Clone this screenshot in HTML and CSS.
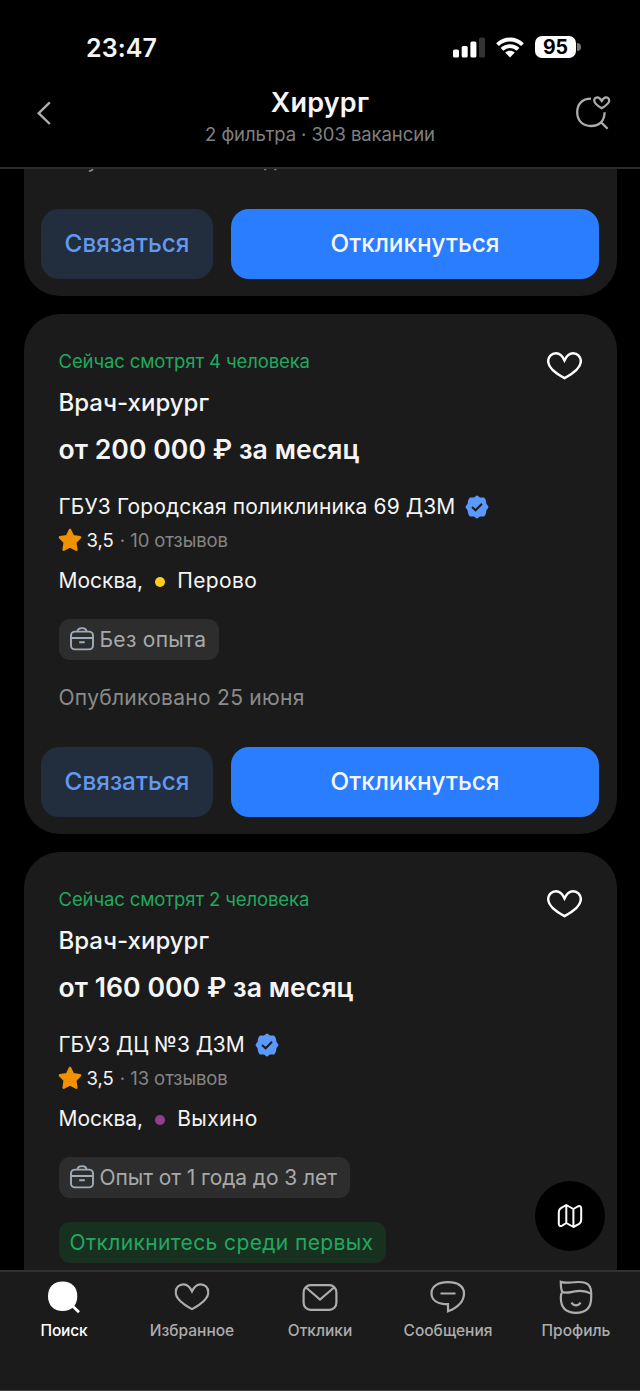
FILE: index.html
```html
<!DOCTYPE html>
<html lang="ru">
<head>
<meta charset="utf-8">
<title>Хирург</title>
<link rel="stylesheet" href="styles.css">
</head>
<body>
<svg class="defs" width="0" height="0">
  <symbol id="heart" viewBox="0 0 35 28"><path d="M17.5 8.4C15.2 3.5 12.2 1.3 9 1.3C4.4 1.3 1.2 4.6 1.2 9.2C1.2 15.8 8.6 21.3 17.5 26.1C26.4 21.3 33.8 15.8 33.8 9.2C33.8 4.6 30.6 1.3 26 1.3C22.8 1.3 19.8 3.5 17.5 8.4Z"/></symbol>
  <symbol id="star" viewBox="0 0 24 24"><path d="M12 2L15 8.2L22 9.3L17.2 14.4L18.3 21.6L12 18.4L5.7 21.6L6.8 14.4L2 9.3L9 8.2Z" fill="#f29100" stroke="#f29100" stroke-width="2.6" stroke-linejoin="round"/></symbol>
  <symbol id="verified" viewBox="0 0 24 24"><path d="M12 1.6L14.6 3.6L18.6 3.6L19.8 5.6L20.4 9L22.4 12L20.4 15L19.8 18.4L18.6 20.4L14.6 20.4L12 22.4L9.4 20.4L5.4 20.4L4.2 18.4L3.6 15L1.6 12L3.6 9L4.2 5.6L5.4 3.6L9.4 3.6Z" fill="#5a9aff" stroke="#5a9aff" stroke-width="2.2" stroke-linejoin="round"/><path d="M7 12L10.6 15.3L17 8.7" fill="none" stroke="#1b1b1b" stroke-width="2"/></symbol>
  <symbol id="bag" viewBox="0 0 24 24"><rect x="1" y="4.6" width="22" height="17.8" rx="4"/><path d="M1.2 11H22.8M9.2 15.2H14.8M7.4 4.6C7.6 2.4 9.3 1.1 12 1.1S16.4 2.4 16.6 4.6"/></symbol>
</svg>
<div class="screen">
  <header class="header">
    <div class="status">
      <span class="clock">23:47</span>
      <div class="status-icons">
        <svg width="32" height="21" viewBox="0 0 32 21" fill="#fff"><rect x="0" y="12.5" width="6" height="8" rx="1.6"/><rect x="8.7" y="9" width="6" height="11.5" rx="1.6"/><rect x="17.4" y="4.5" width="6" height="16" rx="1.6"/><rect x="26" y="0.5" width="6" height="20" rx="1.6" fill="#333"/></svg>
        <svg width="28" height="21" viewBox="0 0 28 21" fill="none" stroke="#fff" stroke-width="3.9"><path d="M1.5 7.7C8.5 .8 19.5 .8 26.5 7.7"/><path d="M6 12.3C10.4 8 17.6 8 22 12.3"/><path d="M9.2 15.5C12 13 16 13 18.8 15.5L14 20.4Z" fill="#fff" stroke="none"/></svg>
        <div class="battery"><span class="level">95</span><span class="cap"></span></div>
      </div>
    </div>
    <div class="nav">
      <svg class="back" width="16" height="26" viewBox="0 0 16 26" fill="none" stroke="#adadad" stroke-width="2.4"><path d="M13.8 2.4L2.7 13.2L13.8 24"/></svg>
      <div class="heading"><h1>Хирург</h1><p>2 фильтра · 303 вакансии</p></div>
      <svg class="saved" width="36" height="36" viewBox="0 0 36 36" fill="none" stroke="#adadad" stroke-width="2.3"><path d="M16 3.6C7.3 3.6 2.2 9 2.2 17.3S7.6 31 16 31S29.6 25.8 29.6 17.3M25.4 26.6L32.6 33.8"/><path d="M26.7 5.8C25.2 3.4 24 2.2 22.2 2.3C20.2 2.4 19.1 3.9 19.3 6C19.6 9 22.9 11 26.7 13.2C30.5 11 33.8 9 34.1 6C34.3 3.9 33.2 2.4 31.2 2.3C29.4 2.2 28.2 3.4 26.7 5.8Z"/></svg>
    </div>
  </header>

  <main class="list">
    <article class="card partial">
      <p class="published">Опубликовано сегодня</p>
      <div class="actions"><button class="btn contact">Связаться</button><button class="btn apply">Откликнуться</button></div>
    </article>

    <article class="card">
      <div class="card-top"><p class="watching">Сейчас смотрят 4 человека</p><svg class="like" width="35" height="28"><use href="#heart"/></svg></div>
      <h2 class="job">Врач-хирург</h2>
      <p class="salary">от 200 000 ₽ за месяц</p>
      <p class="company clinic"><span>ГБУЗ Городская поликлиника 69 ДЗМ</span><svg width="24" height="24"><use href="#verified"/></svg></p>
      <p class="rating"><svg width="24" height="24"><use href="#star"/></svg><b>3,5</b><span>· 10 отзывов</span></p>
      <p class="city"><span>Москва,</span><i class="dot yellow"></i><span class="metro">Перово</span></p>
      <p class="tag"><svg width="24" height="24"><use href="#bag"/></svg><span>Без опыта</span></p>
      <p class="published">Опубликовано 25 июня</p>
      <div class="actions"><button class="btn contact">Связаться</button><button class="btn apply">Откликнуться</button></div>
    </article>

    <article class="card last">
      <div class="card-top"><p class="watching">Сейчас смотрят 2 человека</p><svg class="like" width="35" height="28"><use href="#heart"/></svg></div>
      <h2 class="job">Врач-хирург</h2>
      <p class="salary">от 160 000 ₽ за месяц</p>
      <p class="company"><span>ГБУЗ ДЦ №3 ДЗМ</span><svg width="24" height="24"><use href="#verified"/></svg></p>
      <p class="rating"><svg width="24" height="24"><use href="#star"/></svg><b>3,5</b><span>· 13 отзывов</span></p>
      <p class="city"><span>Москва,</span><i class="dot purple"></i><span class="metro">Выхино</span></p>
      <p class="tag long"><svg width="24" height="24"><use href="#bag"/></svg><span>Опыт от 1 года до 3 лет</span></p>
      <p class="tag first">Откликнитесь среди первых</p>
    </article>
  </main>

  <button class="map" aria-label="Карта"><svg width="26" height="26" viewBox="0 0 26 26" fill="none" stroke="#fff" stroke-width="2" stroke-linejoin="round"><path d="M9.3 2L16.4 6L20.7 3.5C22.9 2.4 24.2 3.2 24.2 5.7V16.5C24.2 19 23.6 20 21.7 21.2L16.4 24L9.3 20L5.2 22.6C3 23.7 1.8 22.8 1.8 20.4V9.5C1.8 7.2 2.4 6 4.3 4.9ZM9.3 2V20M16.4 6V24"/></svg></button>

  <nav class="tabs">
    <a class="tab active"><svg width="36" height="36" viewBox="0 0 36 36"><path d="M16.6 2.6C25.6 2.6 31.3 8.2 31.3 17.2S25.6 32 16.6 32S2 26.2 2 17.2S7.6 2.6 16.6 2.6Z" fill="#fff" stroke="none"/><path d="M26 26.5L33 33.2" stroke="#fff" stroke-width="2.8"/></svg><span>Поиск</span></a>
    <a class="tab"><svg width="36" height="36" viewBox="0 -4 35 36"><use href="#heart" width="35" height="28"/></svg><span>Избранное</span></a>
    <a class="tab"><svg width="36" height="36" viewBox="0 0 36 36"><rect x="1.6" y="6.2" width="32.8" height="24.6" rx="7"/><path d="M4 8.5L18 20.5L32 8.5"/></svg><span>Отклики</span></a>
    <a class="tab"><svg width="36" height="36" viewBox="0 0 36 36"><path d="M18 3.2C28.2 3.2 34 7.6 34 14.4C34 22.5 27.8 28.3 18 32.3V25.2C7.2 25.2 1.5 21 1.5 14.2S8 3.2 18 3.2ZM10.5 14.5H25.5"/></svg><span>Сообщения</span></a>
    <a class="tab"><svg width="36" height="36" viewBox="0 0 36 36"><path d="M4.4 13.1C2.9 10.5 2.8 7 2.8 2.9C5.5 3.8 9 3.9 13 3.5C25 2.1 33.2 2.9 33.2 14V18.5C33.2 28.4 27.8 33.8 18 33.8S2.8 28.4 2.8 18.5C2.8 16.5 3.1 14.5 4.4 13.1C8 14.6 12 13.3 16.5 12.4C23 11.2 28.5 12 33.2 14.6M13.5 23.6C15.5 27.3 20.5 27.3 22.5 23.6"/></svg><span>Профиль</span></a>
  </nav>
</div>
</body>
</html>
```
FILE: styles.css
```css
* { box-sizing: border-box; }
body, h1, h2, p { margin: 0; }
body { background: #000; color: #f5f5f5; font-family: Inter, "Liberation Sans", sans-serif; }
button { border: 0; padding: 0; font: inherit; color: inherit; }
svg { display: block; flex: none; }
.defs { position: absolute; }

.screen { position: relative; display: flex; flex-direction: column; width: 640px; height: 1391px; overflow: hidden; }

.header { flex: none; height: 169px; border-bottom: 2px solid #2c2c2c; background: #000; }
.status { display: flex; justify-content: space-between; align-items: center; height: 94px; padding: 0 59px 0 86px; }
.clock { font-size: 25px; font-weight: 600; letter-spacing: .1px; line-height: 32px; padding-top: 1px; }
.status-icons { display: flex; align-items: center; gap: 11px; }
.battery { display: flex; align-items: center; gap: 1px; }
.level { width: 41px; height: 22px; border-radius: 7px; background: #fff; color: #000; font-size: 19.5px; font-weight: 700; line-height: 22px; text-align: center; }
.cap { width: 4px; height: 8px; border-radius: 0 4px 4px 0; background: #777; }
.nav { display: flex; justify-content: space-between; align-items: flex-start; padding: 0 29px 0 36px; }
.back { margin-top: 6px; }
.saved { margin-top: 1px; }
.heading { width: 300px; margin: -7px 0 0 13px; text-align: center; }
.heading h1 { font-size: 27px; font-weight: 600; letter-spacing: .2px; line-height: 32px; }
.heading p { margin-top: 2px; color: #808080; font-size: 18.5px; letter-spacing: -.08px; line-height: 26px; }

.list { display: flex; flex: 1; flex-direction: column; gap: 18px; min-height: 0; overflow: hidden; padding: 0 23.5px; }
.card { flex: none; padding: 34px 17.5px 17px; border-radius: 36px; background: #1b1b1b; }
.card > :not(.actions), .card-top { margin-left: 17.5px; }
.partial { height: 281px; margin-top: -154px; padding-top: 131px; }
.partial .published { margin-top: 0; }
.last { padding-bottom: 60px; }
.card-top { display: flex; justify-content: space-between; height: 26px; padding-right: 17px; }
.like { margin-top: 3.5px; stroke: #fff; stroke-width: 2.5; fill: none; }
.watching { color: #22a860; font-size: 18.5px; letter-spacing: -.12px; line-height: 26px; }
.job { margin-top: 12px; font-size: 24px; font-weight: 500; line-height: 34px; }
.salary { margin-top: 10px; font-size: 26.6px; font-weight: 600; letter-spacing: .05px; line-height: 38px; }
.company { display: flex; align-items: center; gap: 10px; margin-top: 25px; font-size: 21px; letter-spacing: -.06px; line-height: 28px; }
.clinic { letter-spacing: .13px; }
.rating { display: flex; align-items: center; margin-top: 5.5px; font-size: 18.5px; line-height: 26px; }
.rating svg { margin-left: -1px; }
.rating b { margin: 0 6px 0 5px; font-weight: 400; }
.rating span { color: #858585; letter-spacing: -.08px; }
.city { display: flex; align-items: center; margin-top: 14px; font-size: 21px; line-height: 28px; }
.metro { letter-spacing: .4px; }
.dot { width: 10px; height: 10px; margin: 2px 12px 0; border-radius: 50%; }
.yellow { background: #ffcd1e; }
.purple { background: #943e90; }
.tag { display: flex; align-items: center; gap: 6px; width: 160px; height: 41px; margin-top: 24px; padding-left: 11px; border-radius: 11px; background: #2d2d2d; color: #a9a9a9; font-size: 21px; letter-spacing: .3px; }
.tag svg { fill: none; stroke: #9facb9; stroke-width: 1.9; }
.long { width: 291px; letter-spacing: -.08px; }
.first { width: 327px; background: #18301f; color: #22a860; letter-spacing: .38px; }
.published { margin-top: 24.5px; color: #8b8b8b; font-size: 21px; letter-spacing: .28px; line-height: 28px; }
.actions { display: flex; gap: 18px; margin-top: 35px; }
.btn { height: 70px; padding-bottom: 2px; border-radius: 18px; font-size: 24.3px; font-weight: 500; }
.contact { width: 172px; background: #222d3d; color: #6299f0; }
.apply { flex: 1; background: #2a7dff; }

.map { position: absolute; right: 35px; top: 1181px; display: grid; place-items: center; width: 70px; height: 70px; border-radius: 50%; background: #000; }

.tabs { display: flex; flex: none; height: 121px; border-top: 2px solid #303030; border-bottom: 1px solid #434343; background: #1b1b1b; }
.tab { display: flex; flex: 1; flex-direction: column; align-items: center; padding-top: 7px; color: #adadad; font-size: 15.5px; font-weight: 500; line-height: 22px; }
.tab svg { fill: none; stroke: currentColor; stroke-width: 2.2; margin-bottom: 5px; }
.active { color: #fff; }
.active span { letter-spacing: -.2px; }
```
